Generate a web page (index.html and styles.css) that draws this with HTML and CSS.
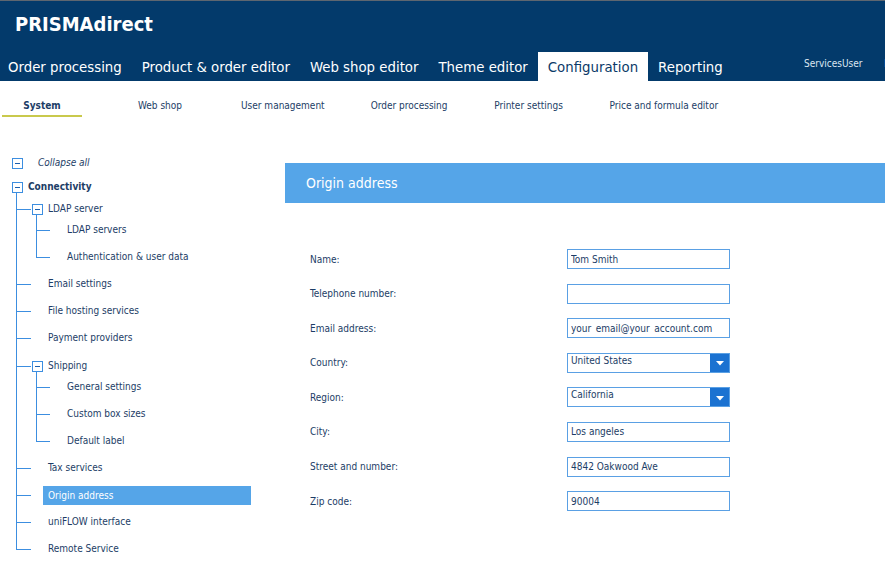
FILE: index.html
```
<!DOCTYPE html>
<html lang="en">
<head>
    <meta charset="UTF-8">
    <meta name="viewport" content="width=device-width, initial-scale=1.0">
    <title>PRISMAdirect - Configuration</title>
    <link rel="stylesheet" href="styles.css">
</head>
<body>
    <header class="topbar">
        <div class="brand">PRISMAdirect</div>
        <nav class="main-nav">
            <a class="tab" href="#">Order processing</a>
            <a class="tab" href="#">Product &amp; order editor</a>
            <a class="tab" href="#">Web shop editor</a>
            <a class="tab" href="#">Theme editor</a>
            <a class="tab active" href="#">Configuration</a>
            <a class="tab" href="#">Reporting</a>
            <div class="user-menu">
                <span class="user-name">ServicesUser</span>
                <span class="logout">Log out</span>
            </div>
        </nav>
    </header>

    <nav class="sub-nav">
        <a class="sub-item active" href="#">System</a>
        <a class="sub-item" href="#">Web shop</a>
        <a class="sub-item" href="#">User management</a>
        <a class="sub-item" href="#">Order processing</a>
        <a class="sub-item" href="#">Printer settings</a>
        <a class="sub-item" href="#">Price and formula editor</a>
    </nav>

    <div class="page">
        <aside class="sidebar">
            <div class="row head collapse-all">
                <span class="toggle"></span><span class="label">Collapse all</span>
            </div>
            <ul class="tree">
                <li class="node">
                    <div class="row head"><span class="toggle"></span><span class="label strong">Connectivity</span></div>
                    <ul class="branch lvl1">
                        <li class="node">
                            <div class="row head"><span class="toggle"></span><span class="label">LDAP server</span></div>
                            <ul class="branch lvl2">
                                <li><div class="row leaf"><span class="spacer"></span><span class="label">LDAP servers</span></div></li>
                                <li><div class="row leaf"><span class="spacer"></span><span class="label">Authentication &amp; user data</span></div></li>
                            </ul>
                        </li>
                        <li><div class="row leaf"><span class="spacer"></span><span class="label">Email settings</span></div></li>
                        <li><div class="row leaf"><span class="spacer"></span><span class="label">File hosting services</span></div></li>
                        <li><div class="row leaf"><span class="spacer"></span><span class="label">Payment providers</span></div></li>
                        <li class="node">
                            <div class="row head"><span class="toggle"></span><span class="label">Shipping</span></div>
                            <ul class="branch lvl2">
                                <li><div class="row leaf"><span class="spacer"></span><span class="label">General settings</span></div></li>
                                <li><div class="row leaf"><span class="spacer"></span><span class="label">Custom box sizes</span></div></li>
                                <li><div class="row leaf"><span class="spacer"></span><span class="label">Default label</span></div></li>
                            </ul>
                        </li>
                        <li><div class="row leaf"><span class="spacer"></span><span class="label">Tax services</span></div></li>
                        <li><div class="row leaf selected"><span class="spacer"></span><span class="label">Origin address</span></div></li>
                        <li><div class="row leaf"><span class="spacer"></span><span class="label">uniFLOW interface</span></div></li>
                        <li><div class="row leaf"><span class="spacer"></span><span class="label">Remote Service</span></div></li>
                    </ul>
                </li>
            </ul>
        </aside>

        <main class="content">
            <h2 class="panel-title">Origin address</h2>
            <form class="address-form">
                <label for="name">Name:</label>
                <input type="text" id="name" value="Tom Smith">

                <label for="phone">Telephone number:</label>
                <input type="text" id="phone" value="">

                <label for="email">Email address:</label>
                <input type="text" id="email" value="your_email@your_account.com">

                <label>Country:</label>
                <div class="select-box">
                    <span class="select-value">United States</span>
                    <span class="select-btn"><svg width="8" height="5" viewBox="0 0 8 5"><path d="M0 0h8L4 4.5z" fill="#fff"/></svg></span>
                </div>

                <label>Region:</label>
                <div class="select-box">
                    <span class="select-value">California</span>
                    <span class="select-btn"><svg width="8" height="5" viewBox="0 0 8 5"><path d="M0 0h8L4 4.5z" fill="#fff"/></svg></span>
                </div>

                <label for="city">City:</label>
                <input type="text" id="city" value="Los angeles">

                <label for="street">Street and number:</label>
                <input type="text" id="street" value="4842 Oakwood Ave">

                <label for="zip">Zip code:</label>
                <input type="text" id="zip" value="90004">
            </form>
        </main>
    </div>
</body>
</html>
```

FILE: styles.css
```
body {
    margin: 0;
    font-family: "DejaVu Sans Condensed", "DejaVu Sans", sans-serif;
    font-stretch: condensed;
    font-size: 10px;
    color: #1c3d66;
    background-color: #fff;
    overflow: hidden;
}
a {
    text-decoration: none;
    color: inherit;
}
ul {
    list-style: none;
    margin: 0;
    padding: 0;
}

/* top bar */
.topbar {
    background-color: #033a6b;
    border-top: 1px solid #5e6670;
    color: #fff;
}
.brand {
    height: 51px;
    line-height: 46px;
    padding-left: 15px;
    font-size: 20px;
    font-weight: bold;
}
.main-nav {
    display: flex;
    height: 29px;
    margin-left: -2px;
}
.tab {
    padding: 1px 10px 0;
    line-height: 28px;
    font-size: 14.8px;
    white-space: nowrap;
}
.tab.active {
    background-color: #fff;
    color: #0b3a68;
}
.user-menu {
    margin-left: auto;
    width: 81px;
    flex-shrink: 0;
    overflow: hidden;
    white-space: nowrap;
    line-height: 23px;
    font-size: 10px;
    color: #dbe6f1;
}
.logout {
    margin-left: 19px;
}

/* second level nav */
.sub-nav {
    display: flex;
    padding: 18px 0 0 2px;
    height: 18px;
}
.sub-item {
    min-width: 80px;
    margin-right: 36px;
    padding: 0 5px 2px;
    text-align: center;
    line-height: 14px;
    height: 18px;
    border-bottom: 2px solid transparent;
    white-space: nowrap;
    box-sizing: border-box;
}
.sub-item:first-child {
    margin-right: 38px;
}
.sub-item.active {
    font-weight: bold;
    border-bottom-color: #c9c94c;
}

.page {
    display: flex;
}

/* tree */
.sidebar {
    width: 285px;
    flex-shrink: 0;
    padding-top: 35px;
}
.row {
    display: flex;
    white-space: nowrap;
}
.row.head {
    height: 22px;
    align-items: center;
}
.row.leaf {
    height: 27px;
    align-items: flex-start;
}
.toggle,
.spacer {
    width: 11px;
    height: 11px;
    flex-shrink: 0;
    box-sizing: border-box;
}
.toggle {
    position: relative;
    border: 1px solid #3c8ee0;
    background-color: #fff;
}
.toggle::after {
    content: "";
    position: absolute;
    left: 2px;
    top: 4px;
    width: 5px;
    height: 1px;
    border-top: 1px solid #1b5fae;
}
.label {
    padding-left: 5px;
    line-height: 20px;
}
.label.strong {
    font-weight: bold;
}
.collapse-all {
    padding-left: 12px;
    margin-bottom: 2px;
}
.collapse-all .label {
    padding-left: 15px;
    font-style: italic;
}
.tree {
    padding-left: 12px;
}
.lvl1 {
    padding-left: 20px;
}
.lvl2 {
    padding-left: 19px;
}
.lvl1 > li > .row .label {
    width: 208px;
    box-sizing: border-box;
}
.row.selected .label {
    background-color: #55a5e8;
    color: #fff;
    height: 19px;
    line-height: 19px;
    margin-top: 1px;
}

/* tree lines */
.branch > li {
    position: relative;
}
.branch > li::before {
    content: "";
    position: absolute;
    left: -16px;
    top: 0;
    bottom: 0;
    border-left: 1px solid #3c8ee0;
}
.branch > li:first-child::before {
    top: -6px;
}
.branch > li:last-child::before {
    bottom: auto;
    height: 11px;
}
.branch > li::after {
    content: "";
    position: absolute;
    left: -16px;
    top: 10px;
    width: 15px;
    border-top: 1px solid #3c8ee0;
}
.branch > li.node::after {
    top: 11px;
}
.lvl2 > li::before,
.lvl2 > li::after {
    left: -15px;
}
.lvl2 > li::after {
    width: 14px;
}

/* content panel */
.content {
    flex: 1;
    padding-top: 46px;
}
.panel-title {
    margin: 0;
    height: 40px;
    line-height: 40px;
    padding-left: 21px;
    background-color: #55a5e8;
    color: #fff;
    font-size: 14px;
    font-weight: normal;
}
.address-form {
    display: grid;
    grid-template-columns: 257px 163px;
    grid-auto-rows: 20px;
    row-gap: 14.6px;
    align-items: center;
    margin-top: 46px;
    padding-left: 25px;
}
.address-form input,
.select-box {
    width: 163px;
    height: 20px;
    box-sizing: border-box;
    border: 1px solid #5aa0e4;
    font-family: inherit;
    font-stretch: condensed;
    font-size: 10px;
    line-height: 18px;
    color: #1c3d66;
    padding: 0 3px;
    margin: 0;
    outline: none;
}
.select-box {
    display: flex;
    padding-right: 0;
}
.select-value {
    flex: 1;
    line-height: 14px;
}
.select-btn {
    width: 19px;
    height: 18px;
    background-color: #1b72d1;
    display: flex;
    align-items: center;
    justify-content: center;
    padding-top: 2px;
    box-sizing: border-box;
}
```
